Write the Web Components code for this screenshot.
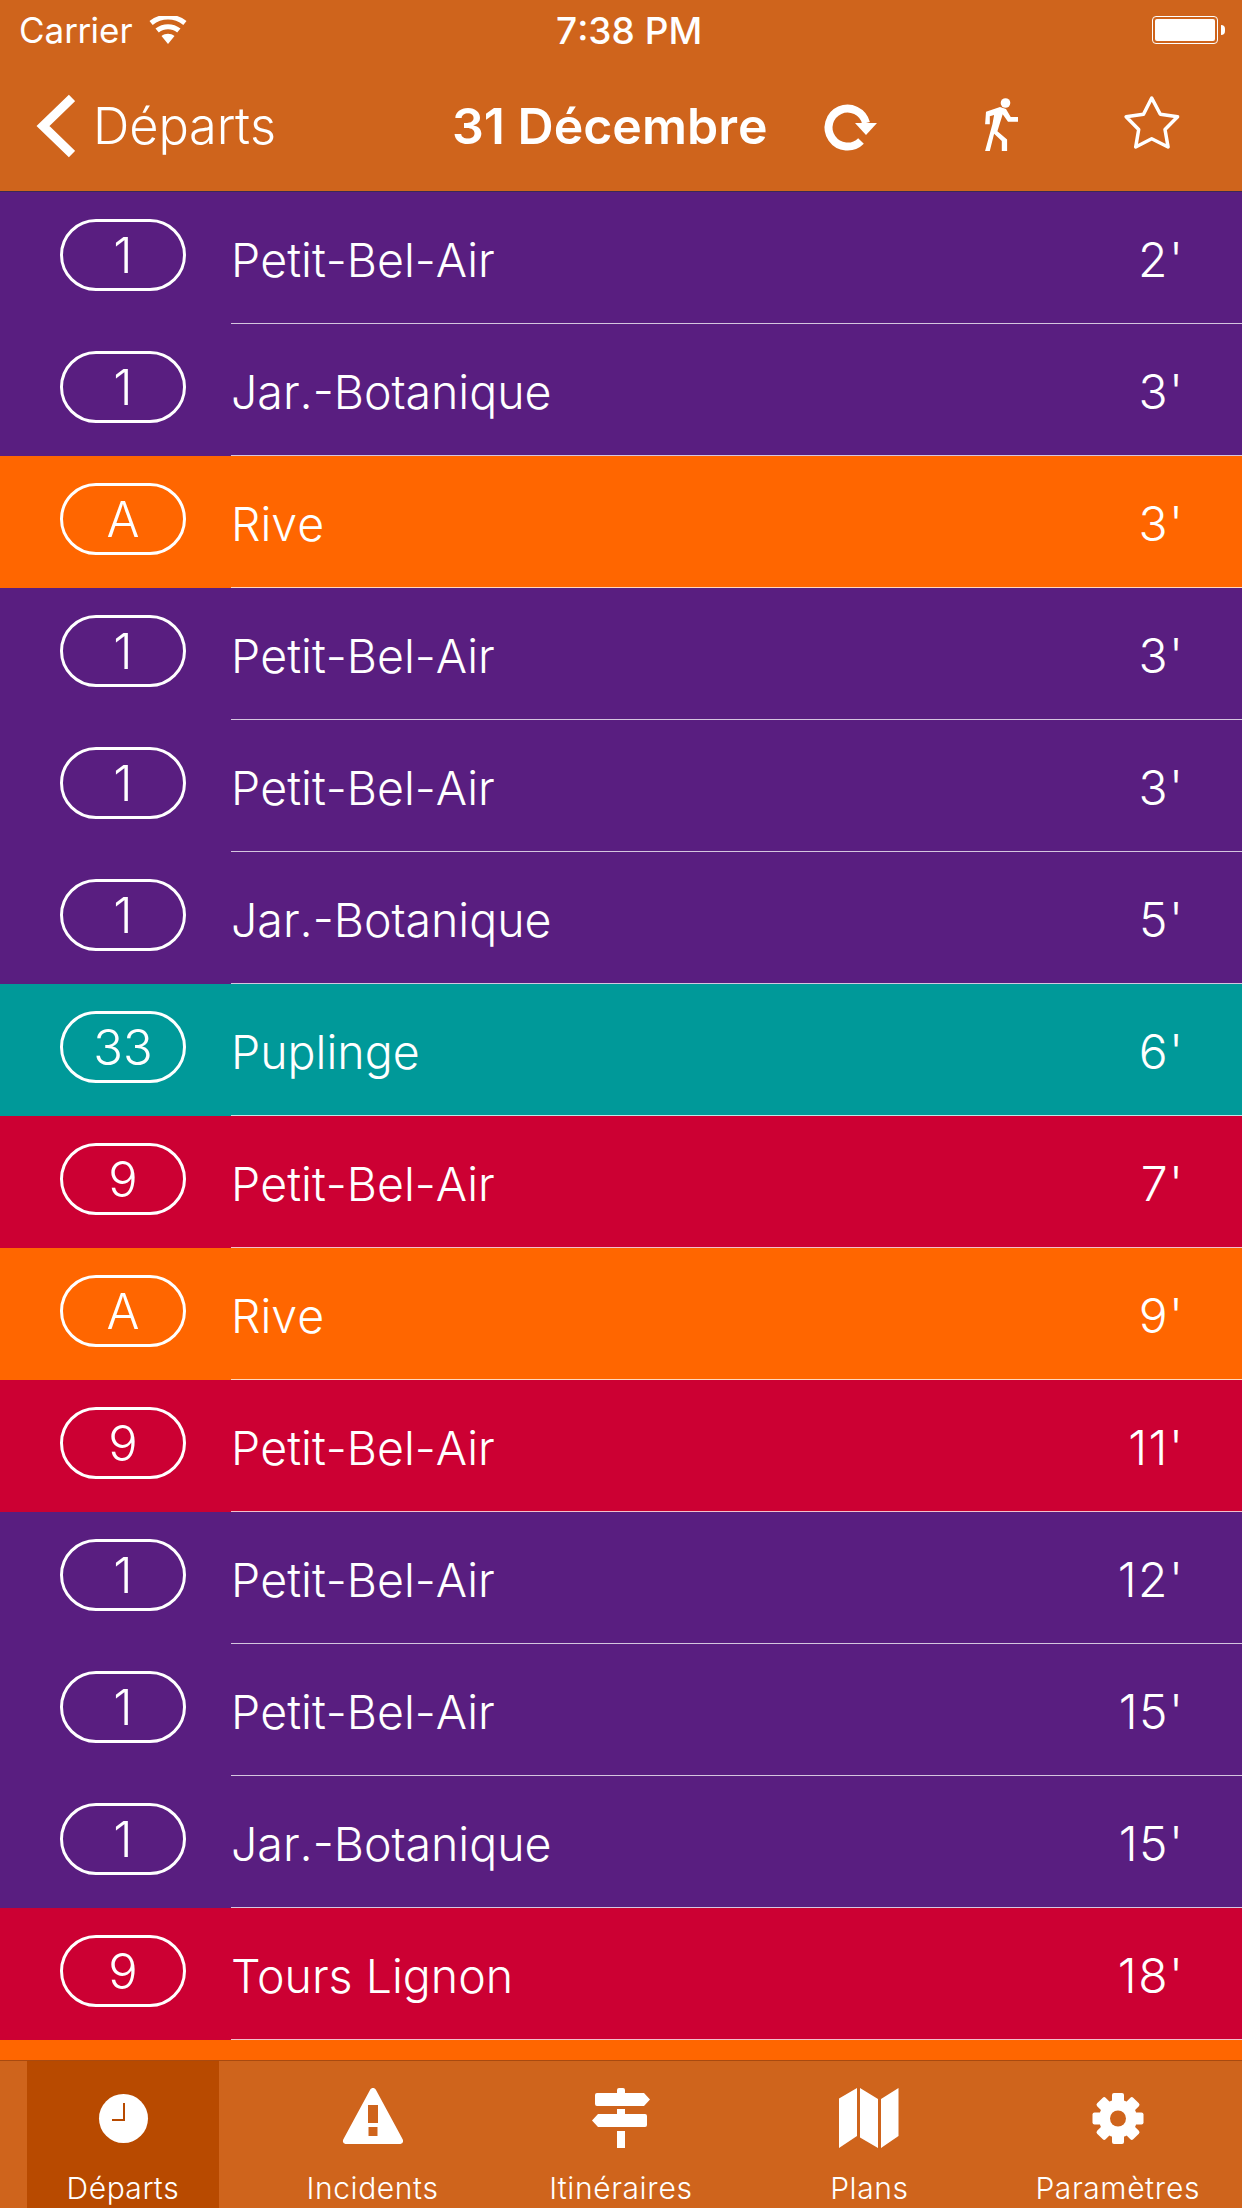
<!DOCTYPE html>
<html>
<head>
<meta charset="utf-8">
<title>Départs</title>
<style>
  html, body { margin: 0; padding: 0; background: #cf641c; }
  body { width: 1242px; height: 2208px; overflow: hidden; font-family: Inter, Roboto, "Liberation Sans", sans-serif; font-kerning: none; color: #fff; }
</style>
</head>
<body>
<app-shell>
  <status-bar slot="top"></status-bar>
  <nav-bar slot="top" back="Départs" heading="31 Décembre"></nav-bar>
  <departure-row line="1" dest="Petit-Bel-Air" time="2'" color="#591e80"></departure-row>
  <departure-row line="1" dest="Jar.-Botanique" time="3'" color="#591e80"></departure-row>
  <departure-row line="A" dest="Rive" time="3'" color="#ff6600"></departure-row>
  <departure-row line="1" dest="Petit-Bel-Air" time="3'" color="#591e80"></departure-row>
  <departure-row line="1" dest="Petit-Bel-Air" time="3'" color="#591e80"></departure-row>
  <departure-row line="1" dest="Jar.-Botanique" time="5'" color="#591e80"></departure-row>
  <departure-row line="33" dest="Puplinge" time="6'" color="#009999"></departure-row>
  <departure-row line="9" dest="Petit-Bel-Air" time="7'" color="#cc0033"></departure-row>
  <departure-row line="A" dest="Rive" time="9'" color="#ff6600"></departure-row>
  <departure-row line="9" dest="Petit-Bel-Air" time="11'" color="#cc0033"></departure-row>
  <departure-row line="1" dest="Petit-Bel-Air" time="12'" color="#591e80"></departure-row>
  <departure-row line="1" dest="Petit-Bel-Air" time="15'" color="#591e80"></departure-row>
  <departure-row line="1" dest="Jar.-Botanique" time="15'" color="#591e80"></departure-row>
  <departure-row line="9" dest="Tours Lignon" time="18'" color="#cc0033" kern></departure-row>
  <departure-row line="A" dest="Rive" time="19'" color="#ff6600"></departure-row>
  <tab-bar slot="bottom">
    <tab-item label="Départs" active>
      <svg width="192" height="66" viewBox="27 2086 192 66">
        <circle cx="123.5" cy="2118.5" r="24.5" fill="#fff"/>
        <path d="M124 2103v17h-12" fill="none" stroke="#b84a00" stroke-width="2"/>
      </svg>
    </tab-item>
    <tab-item label="Incidents">
      <svg width="192" height="66" viewBox="277 2086 192 66">
        <path fill-rule="evenodd" fill="#fff" d="M370 2090c1.500-2.600 4.500-2.600 6 0l26.500 49c1.500 2.800 0 5-3 5h-53c-3 0-4.500-2.200-3-5zM368 2105v18h10v-18zM368.500 2127v9h9v-9z"/>
      </svg>
    </tab-item>
    <tab-item label="Itinéraires">
      <svg width="192" height="66" viewBox="524 2086 192 66">
        <path fill="#fff" d="M616 2090q0-2 2-2h4q2 0 2 2v3h19l6 6.500-6 6.500h-47q-2 0-2-2v-9q0-2 2-2h20zM616 2109h8v5h20q2 0 2 2v9q0 2-2 2h-47l-6-6.500 6-6.500h19zM616 2131h8v17h-8z"/>
      </svg>
    </tab-item>
    <tab-item label="Plans">
      <svg width="192" height="66" viewBox="772 2086 192 66">
        <path fill="#fff" d="M838 2098.500l18-10.500v48l-18 12zM859 2088l18 11v49l-18-10.500zM880 2099l17.500-11v48l-17.500 12z"/>
      </svg>
    </tab-item>
    <tab-item label="Paramètres">
      <svg width="192" height="66" viewBox="1021 2086 192 66">
        <g fill="#fff">
          <rect x="1111" y="2093" width="12" height="51" rx="2"/>
          <rect x="1111" y="2093" width="12" height="51" rx="2" transform="rotate(45 1117 2118.500)"/>
          <rect x="1111" y="2093" width="12" height="51" rx="2" transform="rotate(90 1117 2118.500)"/>
          <rect x="1111" y="2093" width="12" height="51" rx="2" transform="rotate(135 1117 2118.500)"/>
        </g>
        <circle cx="1117" cy="2118.500" r="13.500" fill="none" stroke="#fff" stroke-width="11"/>
        <circle cx="1117" cy="2118.500" r="8" fill="#cf641c"/>
      </svg>
    </tab-item>
  </tab-bar>
</app-shell>

<script>
class AppShell extends HTMLElement {
  constructor() {
    super();
    this.attachShadow({ mode: 'open' });
    this.shadowRoot.innerHTML = `
      <style>
        :host { display: flex; flex-direction: column; width: 1242px; height: 2208px; }
        .list { flex: 1; min-height: 0; overflow: hidden; }
      </style>
      <slot name="top"></slot>
      <div class="list"><slot></slot></div>
      <slot name="bottom"></slot>
    `;
  }
}

class StatusBar extends HTMLElement {
  constructor() {
    super();
    this.attachShadow({ mode: 'open' });
    this.shadowRoot.innerHTML = `
      <style>
        :host { display: grid; grid-template-columns: 537px auto 1fr; align-items: center; height: 60px; padding: 0 17px 0 19px; background: #cf641c; font-size: 35px; }
        .left { display: flex; align-items: center; gap: 16px; }
        .time { font-size: 37px; font-weight: 500; }
        .right { display: flex; justify-content: flex-end; align-items: center; }
        .battery { width: 66px; height: 28px; box-sizing: border-box; border: 1px solid #fff; border-radius: 4px; padding: 2px; }
        .battery div { height: 100%; background: #fff; border-radius: 2px; }
        .tip { width: 4px; height: 10px; margin-left: 3px; background: #fff; border-radius: 0 4px 4px 0; }
      </style>
      <div class="left">
        <span>Carrier</span>
        <svg width="38" height="28" viewBox="0 0 38 28">
          <path fill="#fff" d="M19 28l-6.500-8c3.800-3 9.200-3 13 0zM9.800 16.500l-3.300-4c7.200-5.800 17.800-5.800 25 0l-3.300 4c-5.400-4.300-13-4.300-18.400 0zM3.700 9l-3.200-4c10.700-8.600 26.300-8.600 37 0l-3.200 4c-9-7.200-21.600-7.200-30.600 0z"/>
        </svg>
      </div>
      <div class="time">7:38 PM</div>
      <div class="right"><div class="battery"><div></div></div><div class="tip"></div></div>
    `;
  }
}

class NavBar extends HTMLElement {
  constructor() {
    super();
    this.attachShadow({ mode: 'open' });
    this.shadowRoot.innerHTML = `
      <style>
        :host { display: flex; align-items: center; height: 131px; padding-right: 17px; background: #cf641c; border-bottom: 1px solid #3c2a55; }
        .back { display: flex; align-items: center; width: 452px; box-sizing: border-box; padding-left: 35px; gap: 18px; font-size: 50.5px; font-weight: 300; flex: none; }
        h1 { flex: 1; margin: 0; font-size: 50px; font-weight: 600; white-space: nowrap; }
        .act { width: 150px; height: 70px; flex: none; display: block; }
      </style>
      <div class="back">
        <svg width="40" height="66" viewBox="35 93 40 66">
          <path d="M72 98L43 126l29 28" fill="none" stroke="#fff" stroke-width="9"/>
        </svg>
        <span>${this.getAttribute('back')}</span>
      </div>
      <h1>${this.getAttribute('heading')}</h1>
      <svg class="act" viewBox="775 90 150 70">
        <path d="M866 122a19 19 0 1 0-5 18" fill="none" stroke="#fff" stroke-width="8"/>
        <path d="M855 122h22l-11 12z" fill="#fff"/>
      </svg>
      <svg class="act" viewBox="925 90 150 70">
        <circle cx="1005.500" cy="102" r="4.800" fill="#fff"/>
        <path fill="#fff" d="M986 110.700l14-4.700 6 2 4.700 8h7.300v4.700h-10l-5.300-7.500-5.300 17 9.700 8.300v11.500h-5.300v-10l-7.700-7.300-4.300 17.300h-4.700l7.300-26.700 1.700-9.300-4.300 1.300v8h-4.700z"/>
      </svg>
      <svg class="act" viewBox="1075 90 150 70">
        <path fill="none" stroke="#fff" stroke-width="3.500" stroke-linejoin="round" d="M1151.700 97l8.600 16.300 17.300 2.500-12.600 12.700 3.100 17.500-16.400-8.300-16 8.300 3-17.500-12.600-12.700 17.400-2.500z"/>
      </svg>
    `;
  }
}

class DepartureRow extends HTMLElement {
  constructor() {
    super();
    this.attachShadow({ mode: 'open' });
    const color = this.getAttribute('color');
    this.shadowRoot.innerHTML = `
      <style>
        :host { display: grid; grid-template-columns: 231px 1fr; height: 132px; background: ${color}; font-weight: 350; }
        :host([kern]) .dest { font-kerning: normal; }
        .side { display: flex; align-items: flex-start; padding: 27px 0 0 60px; }
        .badge { width: 126px; height: 72px; box-sizing: border-box; border: 3px solid #fff; border-radius: 36px; display: flex; align-items: center; justify-content: center; font-size: 49px; line-height: 1; }
        .main { display: flex; align-items: center; justify-content: space-between; padding-right: 57.5px; border-bottom: 1px solid rgba(255,255,255,.75); }
        .dest { font-size: 46.5px; padding-top: 5px; }
        .time { font-size: 48px; padding-top: 3px; letter-spacing: 1.5px; }
      </style>
      <div class="side"><div class="badge">${this.getAttribute('line')}</div></div>
      <div class="main">
        <span class="dest">${this.getAttribute('dest')}</span>
        <span class="time">${this.getAttribute('time')}</span>
      </div>
    `;
  }
}

class TabBar extends HTMLElement {
  constructor() {
    super();
    this.attachShadow({ mode: 'open' });
    this.shadowRoot.innerHTML = `
      <style>
        :host { display: grid; grid-template-columns: repeat(5, 248.4px); height: 147px; background: #cf641c; border-top: 1px solid #a84a10; }
      </style>
      <slot></slot>
    `;
  }
}

class TabItem extends HTMLElement {
  constructor() {
    super();
    this.attachShadow({ mode: 'open' });
    this.shadowRoot.innerHTML = `
      <style>
        :host { display: flex; justify-content: center; }
        :host([active]) { justify-content: flex-start; padding-left: 27px; }
        .tab { width: 192px; display: flex; flex-direction: column; align-items: center; padding-top: 25px; box-sizing: border-box; }
        :host([active]) .tab { background: #b84a00; }
        ::slotted(svg) { display: block; }
        .label { font-size: 30px; font-weight: 300; letter-spacing: .6px; white-space: nowrap; line-height: 1; margin-top: 21px; }
      </style>
      <div class="tab">
        <slot></slot>
        <span class="label">${this.getAttribute('label')}</span>
      </div>
    `;
  }
}

customElements.define('app-shell', AppShell);
customElements.define('status-bar', StatusBar);
customElements.define('nav-bar', NavBar);
customElements.define('departure-row', DepartureRow);
customElements.define('tab-bar', TabBar);
customElements.define('tab-item', TabItem);
</script>
</body>
</html>
